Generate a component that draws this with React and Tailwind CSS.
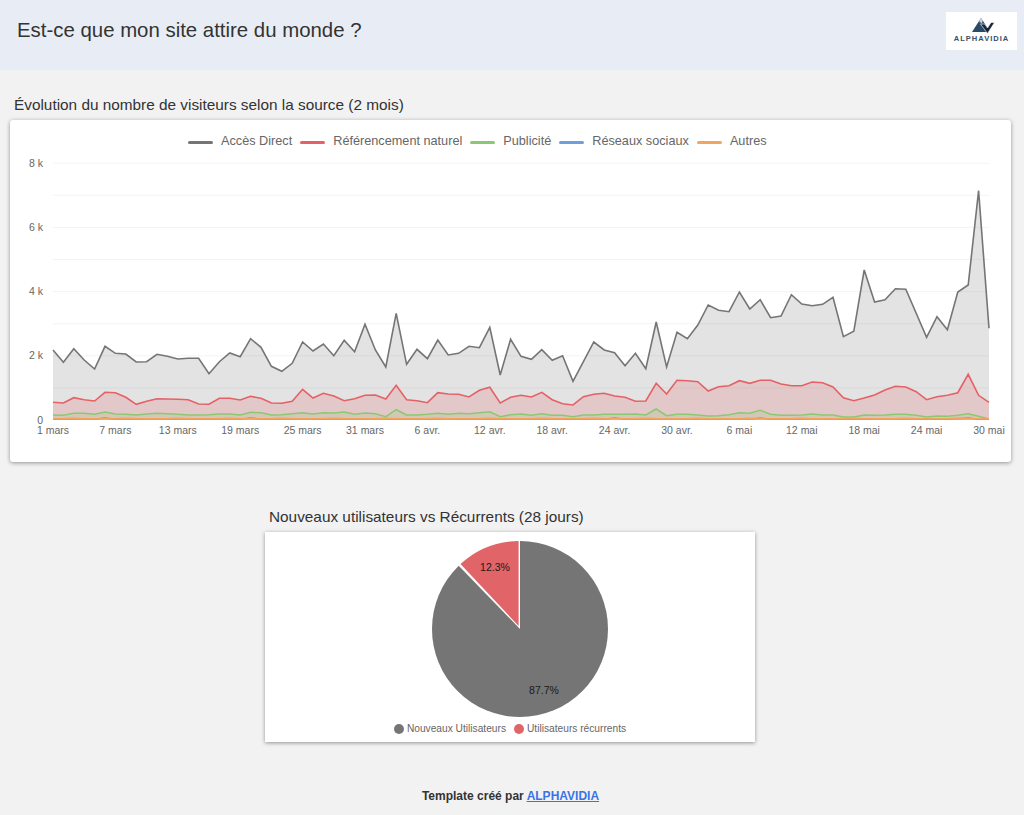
import React from 'react'

// heights above the baseline, in chart pixels, one per day from 1 mars to 30 mai
const direct = [70, 57.7, 71.3, 60, 51, 73.7, 66.7, 66, 58, 58.3, 65.7, 63.7, 61, 61.7, 61.7, 46.3, 58.3, 67, 63.3, 81.3, 72.7, 53.7, 48.7, 56.7, 78, 69, 76, 64.3, 79.7, 68.3, 95.7, 70, 53, 106.7, 55.7, 70.7, 61.3, 80, 65, 66.7, 73.7, 72.3, 92.7, 45, 80.7, 63.7, 60.7, 70.3, 59.7, 64.3, 38.7, 58.3, 78, 70, 67.3, 54.3, 66.7, 51.3, 98, 53, 87.7, 81.3, 95, 115, 109.7, 108.3, 128, 111, 120.3, 102.3, 104, 125.3, 116, 114.3, 115.7, 122.7, 83.3, 88.7, 150, 118, 120.3, 131.3, 130.7, 106.7, 82.7, 103.3, 90.3, 128, 135, 229.3, 91.7]
const organic = [17.7, 17, 22.3, 20.3, 19, 27.7, 27.3, 22.7, 15.7, 18.7, 21.3, 21, 20.7, 20.3, 16, 15.7, 21.7, 21.7, 20, 23.7, 21.7, 17, 16.7, 18.7, 30.7, 22, 26.7, 24, 19.3, 21.3, 24.7, 25, 21, 34.7, 20.3, 19.3, 17.3, 27.3, 26, 25.7, 23, 29.7, 32.7, 17, 22.7, 24.7, 23, 27.7, 20.3, 16.3, 15, 23.3, 25.7, 26.7, 24, 22.7, 18.7, 19, 36.7, 26, 39.7, 39.3, 38.3, 29, 33.3, 34.3, 39.3, 36.7, 39.7, 39.7, 36, 34.3, 34.3, 38, 37.3, 33, 22.3, 19.3, 22, 25, 30, 33.7, 33, 28.3, 20.3, 23.3, 24.7, 27.3, 45.7, 24.7, 17.7]
const ads = [5, 4.7, 6.7, 6.7, 5.7, 8, 6, 5.7, 5, 6, 6.7, 6.3, 5.7, 5, 5, 5.3, 6, 6, 5, 7.7, 7.3, 5, 5.3, 6.3, 7.3, 6, 7.3, 7, 8, 5.7, 7, 6.3, 3.3, 10.3, 5, 5, 5.7, 6.7, 5.7, 6.7, 6.3, 7.3, 8.3, 3.3, 5.3, 6, 4.7, 6.3, 4.7, 4.7, 3.3, 5, 5, 5.7, 5.7, 5.7, 6, 5, 11, 4.3, 5.7, 5.7, 5, 4, 4.3, 5.3, 7.3, 6.7, 9.7, 5.7, 4.7, 4.7, 5, 6, 5, 5, 3, 3, 5, 4.7, 5, 5.7, 5.7, 4.7, 3, 4, 3.7, 4.7, 6.3, 3.7, 1]
const social = direct.map((_, i) => (i === 5 || i === 19 || i === 54 || i === 68 || i === 88 ? 2 : i % 7 === 3 ? 1.2 : 0.7))
const others = direct.map((_, i) => (i % 5 === 2 ? 1.6 : 1.2))

const series = [
  { label: 'Accès Direct', color: '#757575', swatch: 'bg-[#757575]', data: direct },
  { label: 'Référencement naturel', color: '#e46166', swatch: 'bg-[#e46166]', data: organic },
  { label: 'Publicité', color: '#8cc873', swatch: 'bg-[#8cc873]', data: ads },
  { label: 'Réseaux sociaux', color: '#6c9fdc', swatch: 'bg-[#6c9fdc]', data: social },
  { label: 'Autres', color: '#f3a55f', swatch: 'bg-[#f3a55f]', data: others },
]

const xTicks = ['1 mars', '7 mars', '13 mars', '19 mars', '25 mars', '31 mars', '6 avr.', '12 avr.', '18 avr.', '24 avr.', '30 avr.', '6 mai', '12 mai', '18 mai', '24 mai', '30 mai']
const yTicks = ['0', '2 k', '4 k', '6 k', '8 k']

const BASE = 265
const LEFT = 43
const STEP = 10.4

const px = (i) => LEFT + i * STEP
const linePoints = (data) => data.map((h, i) => `${px(i).toFixed(1)},${(BASE - h).toFixed(1)}`).join(' ')

const AreaChart = () => (
  <svg width="1001" height="285" viewBox="0 0 1001 285" className="block">
    {[1, 2, 3, 4, 5, 6, 7, 8].map((k) => (
      <line key={k} x1={LEFT} x2="979" y1={BASE - k * 32.1} y2={BASE - k * 32.1} stroke="#f4f4f4" strokeWidth="1" />
    ))}
    {series.map((s) => (
      <g key={s.label}>
        <polygon
          points={`${px(0)},${BASE} ${linePoints(s.data)} ${px(90)},${BASE}`}
          fill={s.color}
          fillOpacity="0.2"
        />
        <polyline points={linePoints(s.data)} fill="none" stroke={s.color} strokeWidth="1.6" strokeLinejoin="miter" />
      </g>
    ))}
    {yTicks.map((t, i) => (
      <text key={t} x="33" y={BASE - i * 64.25 + 3.5} textAnchor="end" fontSize="10.5" fill="#666666">{t}</text>
    ))}
    {xTicks.map((t, i) => (
      <text key={t} x={px(i * 6)} y="279" textAnchor="middle" fontSize="10.5" fill="#666666">{t}</text>
    ))}
  </svg>
)

const PieChart = () => (
  <svg width="180" height="180" viewBox="0 0 180 180" className="block">
    <circle cx="90" cy="90" r="88" fill="#757575" />
    <path d="M90 90 L90 1 L89 1 A89 89 0 0 0 28 26 Z" fill="#ffffff" />
    <path d="M88.6 87 L88.6 2 A88 88 0 0 0 30.5 25 Z" fill="#e06468" />
    <text x="65" y="32" textAnchor="middle" fontSize="10.5" fill="#1a1a1a">12.3%</text>
    <text x="114" y="155" textAnchor="middle" fontSize="10.5" fill="#1a1a1a">87.7%</text>
  </svg>
)

const Logo = () => (
  <div className="w-[71px] h-[38px] bg-white flex flex-col items-center pt-[5px]">
    <svg width="24" height="17" viewBox="0 0 24 17" className="block ml-[3px]">
      <path d="M1 15 L10 1 L18 13 L16 15 Z" fill="#2b4a68" />
      <path d="M8.3 3.5 L10 1 L11.7 3.5 L11 6.5 L9.5 5 L9 6.5 Z" fill="#c9d3dc" />
      <path d="M9.5 7 L13.5 7 L16.5 11 L20 5.5 L23.5 5.5 L16.5 16.5 Z" fill="#16253d" stroke="#ffffff" strokeWidth="0.6" />
    </svg>
    <span className="text-[7.5px] leading-[9px] font-bold tracking-[1px] text-[#34506c] whitespace-nowrap">ALPHAVIDIA</span>
  </div>
)

export default function App() {
  return (
    <div className="h-[815px] overflow-hidden bg-[#f2f2f2] text-[#2b2b2b] [font-family:'Liberation_Sans',Arial,sans-serif]">
      <header className="h-[70px] bg-[#e8edf5] flex justify-between pl-[17px] pr-[7px] pt-[12px]">
        <h1 className="text-[20.4px] leading-[36px] text-[#333333]">Est-ce que mon site attire du monde ?</h1>
        <Logo />
      </header>

      <section className="px-[10px] pt-[26px]">
        <h2 className="pl-[4px] text-[15.35px] leading-[18px] text-[#333333]">Évolution du nombre de visiteurs selon la source (2 mois)</h2>
        <div className="mt-[6px] w-[1001px] h-[342px] bg-white rounded-[3px] shadow-[0_1px_4px_rgba(0,0,0,0.4)] pt-[14px]">
          <div className="h-[16px] flex items-center gap-[8px] pl-[178px] text-[12.7px] text-[#666666]">
            {series.map((s) => (
              <div key={s.label} className="flex items-center gap-[8px]">
                <span className={`w-[25px] h-[3px] rounded-sm ${s.swatch}`} />
                <span>{s.label}</span>
              </div>
            ))}
          </div>
          <div className="mt-[5px]">
            <AreaChart />
          </div>
        </div>
      </section>

      <section className="ml-[265px] w-[490px] mt-[45px]">
        <h2 className="pl-[4px] text-[15.35px] leading-[20px] text-[#333333]">Nouveaux utilisateurs vs Récurrents (28 jours)</h2>
        <div className="mt-[5px] h-[210px] bg-white shadow-[0_1px_4px_rgba(0,0,0,0.4)] flex flex-col items-center pt-[7px]">
          <div className="ml-[20px]">
            <PieChart />
          </div>
          <div className="mt-[2px] flex items-center gap-[8px] text-[10.2px] text-[#666666]">
            <div className="flex items-center gap-[3px]">
              <span className="w-[10px] h-[10px] rounded-full bg-[#757575]" />
              <span>Nouveaux Utilisateurs</span>
            </div>
            <div className="flex items-center gap-[3px]">
              <span className="w-[10px] h-[10px] rounded-full bg-[#e06468]" />
              <span>Utilisateurs récurrents</span>
            </div>
          </div>
        </div>
      </section>

      <footer className="mt-[46px] text-center text-[12px] leading-[16px] font-bold text-[#333333] pr-[3px]">
        Template créé par <a href="#" className="text-[#3b72e8] underline">ALPHAVIDIA</a>
      </footer>
    </div>
  )
}
